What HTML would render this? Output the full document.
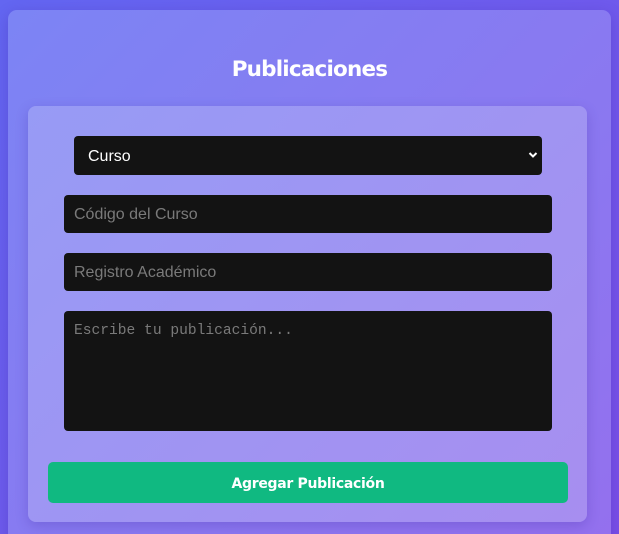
<!DOCTYPE html>
<html><head><meta charset="utf-8"><style>
*{box-sizing:border-box;margin:0;padding:0}
html,body{width:619px;height:534px;overflow:hidden}
body{background:linear-gradient(135deg,#6366f1,#7a4fe8);font-family:"Liberation Sans",sans-serif;position:relative}
.card{position:absolute;left:8px;top:10px;width:603px;height:540px;border-radius:9px;background:linear-gradient(135deg,#7c84f4,#9470ee);box-shadow:0 4px 14px rgba(60,40,160,.3)}
h1{position:absolute;left:0;width:619px;top:57px;text-align:center;color:#fff;font-family:"DejaVu Sans","Liberation Sans",sans-serif;font-weight:bold;font-size:21.5px;letter-spacing:-0.8px}
.panel{position:absolute;left:28px;top:106px;width:559px;height:416px;border-radius:8px;background:linear-gradient(135deg,#979bf5,#a78ef0);box-shadow:0 4px 12px rgba(60,40,160,.25)}
.f{position:absolute;background:#131313;border-radius:4px;color:#7a7a7a;font-size:16px}
.sel{left:74px;top:136px;width:468px;height:39px;color:#fff;padding:12px 14px}
.in{left:64px;width:488px;height:38px;padding:11px 10px}
.ta{left:64px;top:311px;width:488px;height:120px;font-family:"Liberation Mono",monospace;font-size:14.6px;padding:12px 10px}
.btn{position:absolute;left:48px;top:462px;width:520px;height:41px;background:#10b981;border-radius:5px;color:#fff;text-align:center;line-height:44px;font-family:"DejaVu Sans",sans-serif;font-weight:bold;font-size:14px;letter-spacing:-0.3px}
</style></head><body>
<div class="card"></div>
<h1>Publicaciones</h1>
<div class="panel"></div>
<div class="f sel">Curso<svg style="position:absolute;right:4px;top:15px" width="10" height="8" viewBox="0 0 10 8"><path d="M1.5 2l3.5 3.5L8.5 2" stroke="#fff" stroke-width="2" fill="none"/></svg></div>
<div class="f in" style="top:195px">Código del Curso</div>
<div class="f in" style="top:253px">Registro Académico</div>
<div class="f ta">Escribe tu publicación...</div>
<div class="btn">Agregar Publicación</div>
</body></html>
